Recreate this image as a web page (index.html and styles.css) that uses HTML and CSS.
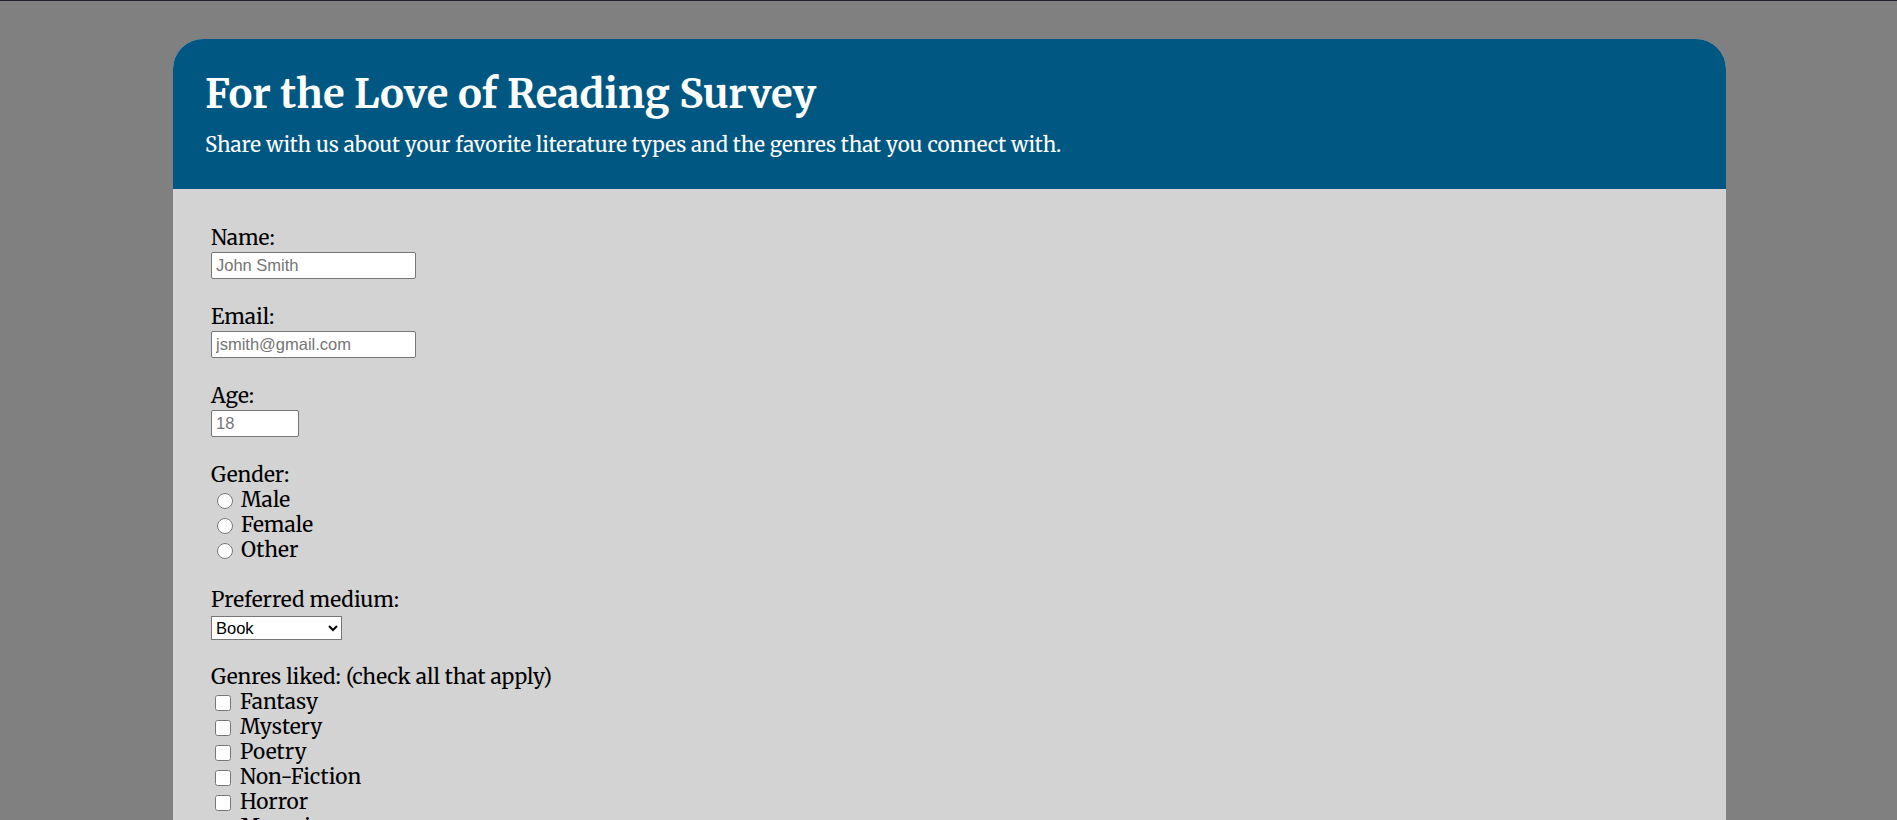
FILE: index.html
```html
<!DOCTYPE html>
<html lang="en">
<head>
<meta charset="utf-8">
<title>For the Love of Reading Survey</title>
<link rel="stylesheet" href="styles.css">
</head>
<body>
<main class="card">
  <header class="header">
    <h1 class="title">For the Love of Reading Survey</h1>
    <p class="subtitle">Share with us about your favorite literature types and the genres that you connect with.</p>
  </header>
  <form class="form">
    <div class="field">
      <label class="label" for="name">Name:</label>
      <input class="text-input" id="name" type="text" placeholder="John Smith">
    </div>
    <div class="field">
      <label class="label" for="email">Email:</label>
      <input class="text-input" id="email" type="email" placeholder="jsmith@gmail.com">
    </div>
    <div class="field">
      <label class="label" for="age">Age:</label>
      <input class="text-input age-input" id="age" type="number" placeholder="18">
    </div>
    <div class="field field-list">
      <div class="label">Gender:</div>
      <label class="option"><input class="radio" type="radio" name="gender">Male</label>
      <label class="option"><input class="radio" type="radio" name="gender">Female</label>
      <label class="option"><input class="radio" type="radio" name="gender">Other</label>
    </div>
    <div class="field field-list">
      <label class="label" for="medium">Preferred medium:</label>
      <select class="select" id="medium">
        <option>Book</option>
        <option>E-book</option>
        <option>Audiobook</option>
      </select>
    </div>
    <div class="field field-list">
      <div class="label">Genres liked: (check all that apply)</div>
      <label class="option"><input class="check" type="checkbox">Fantasy</label>
      <label class="option"><input class="check" type="checkbox">Mystery</label>
      <label class="option"><input class="check" type="checkbox">Poetry</label>
      <label class="option"><input class="check" type="checkbox">Non-Fiction</label>
      <label class="option"><input class="check" type="checkbox">Horror</label>
      <label class="option"><input class="check" type="checkbox">Memoir</label>
      <label class="option"><input class="check" type="checkbox">Romance</label>
    </div>
  </form>
</main>
</body>
</html>
```
FILE: styles.css
```css
html, body {
  margin: 0;
  padding: 0;
}

body {
  background: #808080;
  border-top: 1px solid #23232b;
  font-family: "Merriweather", "DejaVu Serif", serif;
  color: #000;
}

.card {
  width: 1553px;
  margin: 38px 0 0 173px;
  border-radius: 30px 30px 0 0;
  overflow: hidden;
  background: #d3d3d3;
}

.header {
  background: #005882;
  color: #fff;
  height: 150px;
  box-sizing: border-box;
  padding: 31px 32px 0;
}

.title {
  margin: 0;
  font-size: 40px;
  line-height: 48px;
  font-weight: 700;
}

.subtitle {
  margin: 15px 0 0;
  font-size: 20.5px;
  line-height: 25px;
}

.form {
  padding: 37px 38px 40px;
  font-size: 20.8px;
  line-height: 25px;
}

.field {
  display: flex;
  flex-direction: column;
  align-items: flex-start;
  margin-bottom: 26px;
}

.field-list {
  margin-bottom: 25px;
}

.label {
  display: block;
  height: 25px;
}

.text-input {
  box-sizing: border-box;
  width: 205px;
  height: 27px;
  margin: 1px 0 0;
  padding: 1px 4px;
  border: 1px solid #767676;
  border-radius: 2px;
  background: #fff;
  font-family: "Liberation Sans", Arial, sans-serif;
  font-size: 16.5px;
  color: #000;
}

.text-input::placeholder {
  color: #757575;
}

.age-input {
  width: 88px;
}

.select {
  box-sizing: border-box;
  width: 131px;
  height: 24px;
  margin-top: 3px;
  padding: 0;
  border: 1px solid #767676;
  border-radius: 0;
  background: #fff;
  font-family: "Liberation Sans", Arial, sans-serif;
  font-size: 16.5px;
  color: #000;
}

.option {
  display: flex;
  align-items: center;
  height: 25px;
}

.radio {
  width: 16px;
  height: 16px;
  margin: 0 8px 0 6px;
}

.check {
  width: 16px;
  height: 16px;
  margin: 0 9px 0 4px;
}
```
